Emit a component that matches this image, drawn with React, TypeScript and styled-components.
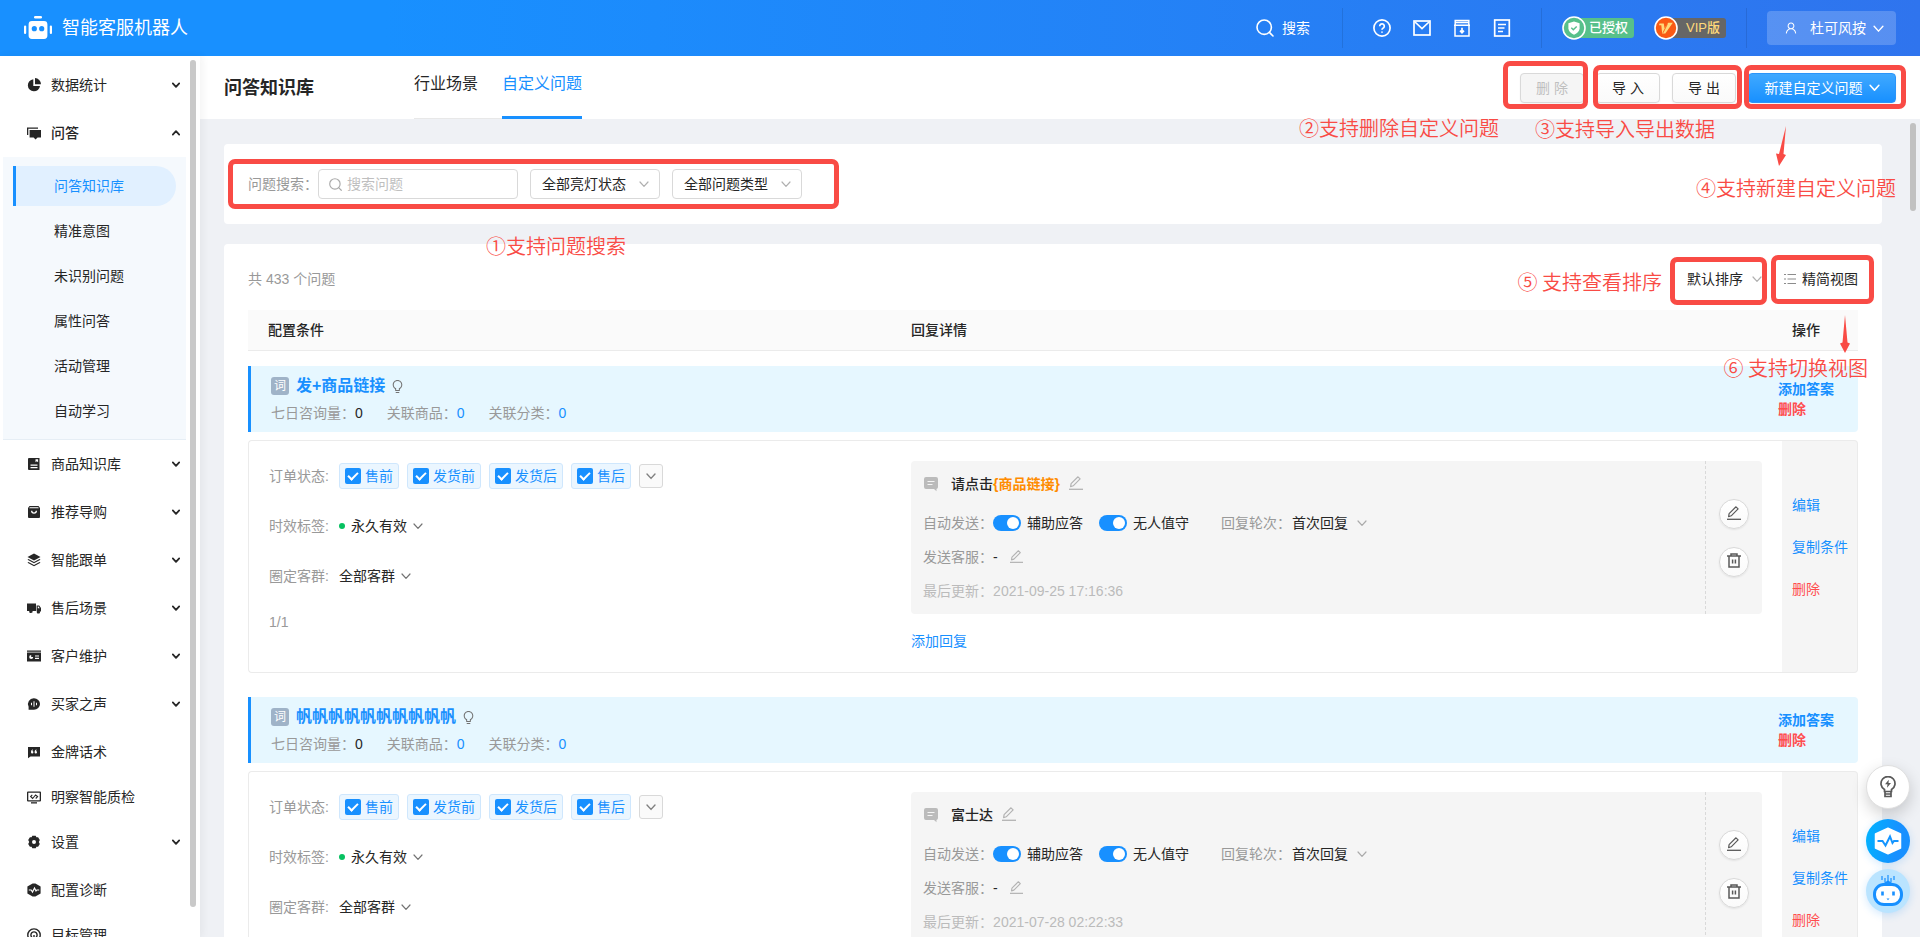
import React from "react";
import styled, { createGlobalStyle } from "styled-components";
import { AiOutlineBulb, AiOutlineUser } from "react-icons/ai";

const blue = "#1890ff";
const red = "#ff4d4f";
const markRed = "#f94b45";

const GlobalStyle = createGlobalStyle`
  *, *::before, *::after { box-sizing: border-box; }
  body {
    margin: 0;
    font-family: "Liberation Sans", "Noto Sans CJK SC", sans-serif;
    font-size: 14px;
    line-height: 22px;
    color: #262626;
    background: #eff1f5;
  }
  button, input, select { font: inherit; color: inherit; margin: 0; padding: 0; border: 0; background: none; }
  button, select { cursor: pointer; }
  a { color: ${blue}; text-decoration: none; }
  h1, h2, h3, p, ul { margin: 0; padding: 0; font: inherit; list-style: none; }
  svg { display: block; flex: none; }
`;

/* ---------- icons ---------- */

const Chevron = ({ size = 10, color = "#999", width = 1.4, up = false }: { size?: number; color?: string; width?: number; up?: boolean }) => (
  <svg width={size} height={size} viewBox="0 0 10 10" fill="none" stroke={color} strokeWidth={width} strokeLinecap="round" strokeLinejoin="round">
    <path d={up ? "M1 7l4-4.4L9 7" : "M1 3l4 4.4L9 3"} />
  </svg>
);

const SearchIcon = ({ size, color }: { size: number; color: string }) => (
  <svg width={size} height={size} viewBox="0 0 18 18" fill="none" stroke={color} strokeWidth="1.6" strokeLinecap="round">
    <circle cx="8.2" cy="8.2" r="7.2" />
    <path d="M13.4 13.4L17 17" />
  </svg>
);

const EditIcon = ({ size }: { size: number }) => (
  <svg width={size} height={size} viewBox="0 0 14 14" fill="none" stroke="currentColor" strokeWidth="1.2" strokeLinejoin="round">
    <path d="M1.600 10.600l.5-3L9 .8l2.100 2.100-6.900 6.900z" />
    <path d="M0 13.300h14" strokeWidth="1.300" />
  </svg>
);

const LogoIcon = () => (
  <svg width="28" height="24" viewBox="0 0 28 24" fill="#fff">
    <rect x="10" y="0" width="8" height="2.6" rx="1.3" />
    <path d="M8 5h12a3.4 3.4 0 013.4 3.400v11.200A3.400 3.400 0 0120 23H8a3.400 3.400 0 01-3.400-3.400V8.400A3.400 3.400 0 018 5z" />
    <rect x="0" y="9.500" width="2.200" height="8.500" rx="1.100" />
    <rect x="25.800" y="9.500" width="2.200" height="8.500" rx="1.100" />
    <circle cx="10.300" cy="12.700" r="2.600" fill={blue} />
    <circle cx="17.700" cy="12.700" r="2.600" fill={blue} />
  </svg>
);

const headerIcons: { name: string; art: React.ReactNode }[] = [
  {
    name: "帮助",
    art: (
      <>
        <circle cx="9" cy="9" r="8.100" />
        <path d="M6.700 7.200a2.300 2.300 0 114 1.500c-.8.7-1.700 1-1.700 2" />
        <path d="M9 12.400v1.300" />
      </>
    ),
  },
  { name: "邮件", art: <><rect x="1" y="2" width="16" height="14" /><path d="M2 3l7 6.500L16 3" /></> },
  {
    name: "下载",
    art: <><path d="M2 6.500V17h14V6.500M1 6.200h16M2.200 6V1.600h13.600V6M2.500 3.600h13" strokeWidth="1.500" /><path d="M9 8.700v5M7 11.700l2 2 2-2" /></>,
  },
  { name: "文档", art: <><rect x="1.700" y="1" width="14.600" height="16" /><path d="M5 5.500h8M5 9h6.500M5 12.500h5" /></> },
];

const menuIcons: Record<string, React.ReactNode> = {
  pie: <><path d="M6.300 1.200A6.100 6.100 0 1013 8H6.300z" /><path d="M8 0a6.200 6.200 0 016 6.200H8z" /></>,
  chat: <><path d="M0 1.500h11v1.300H1.300V9H0z" /><path d="M2.600 4H14v7.500h-3.400L8.500 13.500 6.600 11.500h-4z" /></>,
  book: <path fillRule="evenodd" d="M2 1h10.500v12H2a1 1 0 01-1-1V2a1 1 0 011-1zm6.500 1.200v3l1.300-1 1.300 1v-3zM3.500 7.500v1.200h7V7.500zm0 2.600v1.200h7v-1.200z" />,
  bag: <path fillRule="evenodd" d="M2.500 1h9L13 3v9a1 1 0 01-1 1H2a1 1 0 01-1-1V3zm.3 1.200l-.6 1h9.600l-.6-1zM4 5.800a3 3 0 006 0H8.700a1.700 1.700 0 01-3.400 0z" />,
  layers: <><path d="M7 .5l6.500 3.500L7 7.400.5 4z" /><path d="M1.500 6L.5 6.700 7 10.200l6.500-3.500-1-.7L7 8.900z" /><path d="M1.500 9l-1 .7L7 13.200l6.500-3.500-1-.7L7 11.900z" /></>,
  truck: <path fillRule="evenodd" d="M0 2.500h9V10H5.600a1.700 1.700 0 11-3.300 0H0zM9.600 4.500h2.600L14 7v3.500h-1.200a1.500 1.500 0 11-2.800 0h-.4zM10.800 5.500v1.700h1.900l-1.100-1.700z" />,
  card: <path fillRule="evenodd" d="M0 1.500h14v1.300H0zM0 3.600h14v9H0zm4.200 2.300a2 2 0 102 2h-2zM8 6.500v1.100h4V6.500zm0 2.300v1.100h4V8.800z" />,
  voice: <path fillRule="evenodd" d="M7 1.200a6 5.800 0 110 11.600H1.600V9.700A5.800 5.800 0 017 1.200zM4 5.700v2.600h1V5.700zm2.500-1.400v5.400h1V4.300zM9 5.700v2.600h1V5.700z" />,
  quote: <path fillRule="evenodd" d="M1 2h12v9.500H3.500L1 13.200zm4.900 2.600C4.700 4.900 4 5.700 4 7.300a1.200 1.200 0 101.200-1.200c0-.4.300-.7.900-.9zm3.600 0c-1.200.3-1.900 1.100-1.900 2.700a1.200 1.200 0 101.200-1.200c0-.4.300-.7.900-.9z" />,
  monitor: <><path fillRule="evenodd" d="M1 1.500h12a1 1 0 011 1v8a1 1 0 01-1 1H1a1 1 0 01-1-1v-8a1 1 0 011-1zM1.300 2.800v7.400h11.400V2.800z" /><path d="M4 12.200h6v1.300H4z" /><path d="M5.300 4.800L3.600 6.500l2 2 3-3.500 2 1.600-1.900 1.900" fill="none" stroke="currentColor" strokeWidth="1.100" /></>,
  gear: <path fillRule="evenodd" d="M5.300.8h3.400l.7 1.500 1.700-.1 1.700 2.900-1 1.900 1 1.900-1.700 2.900-1.700-.1-.7 1.500H5.300l-.7-1.500-1.700.1-1.700-2.900 1-1.900-1-1.900 1.700-2.900 1.700.1zM7 5a2 2 0 100 4 2 2 0 000-4z" />,
  pulse: <><path d="M5.600.5h2.800L13.600 3.600v6.800L8.400 13.500H5.600L.4 10.400V3.600z" /><path d="M1.800 7h2.400l1.300 2 2-4 1.500 3 .8-1h2.400" fill="none" stroke="#fff" strokeWidth="1.200" /></>,
  target: <g fill="none" stroke="currentColor" strokeWidth="1.400"><path d="M3.700 12.300a6.200 6.200 0 116.600 0" /><path d="M4.900 9.300a3.100 3.100 0 114.200 0" /><path d="M7 7v5.500" /></g>,
};

const TrashIcon = () => (
  <svg width="14" height="15" viewBox="0 0 14 15" fill="none" stroke="#595959" strokeWidth="1.500">
    <path d="M0 3h14M4 2.600V1h6v1.600M2 3.500V14h10V3.500M5.600 6.500v4M8.400 6.500v4" />
  </svg>
);

const MessageIcon = () => (
  <svg width="16" height="16" viewBox="0 0 16 16">
    <path fill="#bbb" d="M3 1h10a2 2 0 012 2v8a2 2 0 01-1.500 2v2.200L11 13H3a2 2 0 01-2-2V3a2 2 0 012-2z" />
    <path d="M4.500 5.500h7M4.500 8.500h5" stroke="#f5f5f5" strokeWidth="1.200" />
  </svg>
);

/* ---------- page frame ---------- */

const Page = styled.div`
  position: relative;
  display: flex;
  flex-direction: column;
  height: 100vh;
  min-width: 1200px;
  overflow: hidden;
`;

const TopBar = styled.header`
  display: flex;
  align-items: center;
  height: 56px;
  flex: none;
  padding: 0 24px;
  color: #fff;
  background: linear-gradient(90deg, #1890ff 20%, #2f74ee 100%);
`;

const Brand = styled.div`
  display: flex;
  align-items: center;
  gap: 10px;
  margin-right: auto;
  font-size: 18px;
`;

const Divider = styled.span`
  width: 1px;
  height: 40px;
  background: rgba(0, 0, 0, 0.1);
`;

const TopSearch = styled.button`
  display: flex;
  align-items: center;
  gap: 8px;
  margin-right: 32px;
`;

const TopIcons = styled.nav`
  display: flex;
  gap: 22px;
  padding: 0 30px;
`;

const Badges = styled.div`
  display: flex;
  gap: 20px;
  padding: 0 20px;
`;

const Badge = styled.span<{ $bg: string; $fg: string }>`
  position: relative;
  display: flex;
  align-items: center;
  justify-content: flex-end;
  width: 72px;
  height: 24px;
  padding-right: 6px;
  font-size: 13px;
  font-weight: 500;
  color: ${(p) => p.$fg};

  &::before {
    content: "";
    position: absolute;
    z-index: 0;
    inset: 2px 0 2px 12px;
    border-radius: 0 3px 3px 0;
    background: ${(p) => p.$bg};
  }
  svg { position: absolute; left: 0; top: 0; }
  span { position: relative; }
`;

const UserButton = styled.button`
  display: flex;
  align-items: center;
  height: 34px;
  margin-left: 20px;
  padding: 0 12px 0 17px;
  border-radius: 4px;
  background: rgba(255, 255, 255, 0.2);

  span { margin: 0 7px 0 12px; }
`;

const Columns = styled.div`
  display: flex;
  flex: 1;
  min-height: 0;
`;

/* ---------- side menu ---------- */

const SideBar = styled.aside`
  position: relative;
  z-index: 1;
  width: 200px;
  flex: none;
  background: #fff;
  box-shadow: 2px 0 8px rgba(29, 35, 41, 0.06);
`;

const MenuScroll = styled.nav`
  height: 100%;
  padding: 5px 14px 0 3px;
  overflow-y: auto;
  scrollbar-width: none;
`;

const ScrollThumb = styled.div<{ $tone: string }>`
  position: absolute;
  top: 4px;
  right: 4px;
  width: 6px;
  border-radius: 3px;
  background: ${(p) => p.$tone};
`;

const SideThumb = styled(ScrollThumb)`
  bottom: 30px;
`;

const MenuButton = styled.button<{ $group: boolean; $open: boolean }>`
  display: flex;
  align-items: center;
  gap: 10px;
  width: 100%;
  height: ${(p) => (p.$group ? 48 : 45)}px;
  padding: ${(p) => (p.$group ? 0 : 3)}px 6px 0 24px;
  font-weight: ${(p) => (p.$open ? 500 : 400)};

  span { flex: 1; text-align: left; }
`;

const SubMenu = styled.ul`
  display: flex;
  flex-direction: column;
  gap: 5px;
  padding: 9px 10px 8px;
  background: #f5f9fd;
  border-bottom: 1px solid #e6eef5;
`;

const SubLink = styled.a<{ $active: boolean }>`
  display: block;
  padding-left: ${(p) => (p.$active ? 38 : 41)}px;
  line-height: 40px;
  color: ${(p) => (p.$active ? blue : "#262626")};
  background: ${(p) => (p.$active ? "#e1f0ff" : "none")};
  border-left: ${(p) => (p.$active ? `3px solid ${blue}` : "none")};
  border-radius: 0 20px 20px 0;
`;

/* ---------- main column ---------- */

const Main = styled.main`
  display: flex;
  flex-direction: column;
  flex: 1;
  min-width: 0;
`;

const PageHead = styled.div`
  display: flex;
  align-items: center;
  height: 63px;
  flex: none;
  padding: 0 24px;
  background: #fff;
`;

const PageTitle = styled.h1`
  width: 190px;
  font-size: 18px;
  font-weight: 700;
`;

const Tabs = styled.nav`
  display: flex;
  gap: 24px;
  align-self: stretch;
  margin-right: auto;
  background: linear-gradient(#e8e8e8, #e8e8e8) left bottom / 100% 1px no-repeat;
`;

const Tab = styled.a<{ $active: boolean }>`
  font-size: 16px;
  line-height: 56px;
  color: ${(p) => (p.$active ? blue : "#262626")};
  border-bottom: ${(p) => (p.$active ? `3px solid ${blue}` : "none")};
`;

const Actions = styled.div`
  display: flex;
  gap: 12px;
`;

const Button = styled.button<{ $primary?: boolean }>`
  display: flex;
  align-items: center;
  justify-content: center;
  gap: 6px;
  height: 30px;
  min-width: ${(p) => (p.$primary ? 148 : 64)}px;
  border: 1px solid ${(p) => (p.$primary ? "#2b95f9" : "#d9d9d9")};
  border-radius: 4px;
  color: ${(p) => (p.$primary ? "#fff" : "#262626")};
  background: ${(p) => (p.$primary ? "linear-gradient(#40a9ff, #1890ff)" : "linear-gradient(#fff, #fafafa)")};
  box-shadow: 0 1px 2px rgba(0, 0, 0, 0.05);

  &:disabled { color: #bfbfbf; background: #f5f5f5; cursor: not-allowed; }
`;

const ScrollWrap = styled.div`
  position: relative;
  flex: 1;
  min-height: 0;
`;

const Scroll = styled.div`
  display: flex;
  flex-direction: column;
  gap: 20px;
  height: 100%;
  padding: 25px 38px 0 24px;
  overflow-y: auto;
  scrollbar-width: none;
`;

const MainThumb = styled(ScrollThumb)`
  height: 88px;
`;

const Card = styled.section`
  flex: none;
  padding: 24px;
  border-radius: 4px;
  background: #fff;
`;

const Filters = styled.form`
  display: flex;
  align-items: center;
  height: 32px;
`;

const SearchBox = styled.div`
  display: flex;
  align-items: center;
  gap: 5px;
  width: 200px;
  height: 30px;
  margin-right: 12px;
  padding: 0 10px;
  border: 1px solid #d9d9d9;
  border-radius: 4px;

  input { width: 100%; min-width: 0; outline: none; }
  input::placeholder { color: #bfbfbf; }
`;

const Muted = styled.span`
  color: #999;
`;

const SelectShell = styled.span<{ $boxed?: boolean; $tight?: boolean }>`
  display: inline-flex;
  align-items: center;
  gap: ${(p) => (p.$tight ? 6 : 9)}px;
  ${(p) => p.$boxed && `
    justify-content: space-between;
    width: 130px;
    height: 30px;
    margin-right: 12px;
    padding: 0 10px 0 11px;
    border: 1px solid #d9d9d9;
    border-radius: 4px;
  `}

  select { appearance: none; outline: none; }
`;

const Toolbar = styled.div`
  display: flex;
  align-items: center;
  justify-content: space-between;
  height: 22px;
  margin-bottom: 20px;

  div { display: flex; gap: 22px; }
`;

const ViewButton = styled.button`
  display: flex;
  align-items: center;
  gap: 6px;
`;

/* ---------- question table ---------- */

const Table = styled.table`
  width: 100%;
  table-layout: fixed;
  border-collapse: separate;
  border-spacing: 0;

  th, td { padding: 0; text-align: left; vertical-align: top; }
  th {
    height: 41px;
    padding-left: 20px;
    vertical-align: middle;
    font-weight: 500;
    background: #fafafa;
    border-bottom: 1px solid #ebebeb;
  }
  th:nth-child(1) { width: 41%; }
  th:nth-child(2) { padding-left: 3px; }
  th:nth-child(3) { width: 76px; padding-left: 10px; }
`;

const Question = styled.tbody``;

const BannerCell = styled.td`
  && { padding: 15px 0 8px; }
  ${Question} + ${Question} && { padding-top: 24px; }
`;

const Banner = styled.div`
  display: flex;
  align-items: center;
  justify-content: space-between;
  height: 66px;
  padding-left: 20px;
  border-left: 3px solid ${blue};
  border-radius: 0 4px 4px 0;
  background: #e6f7ff;
`;

const BannerTitle = styled.div`
  display: flex;
  align-items: center;
  margin-bottom: 4px;
  line-height: 24px;

  h2 { margin: 0 5px 0 7px; font-size: 16px; font-weight: 700; color: ${blue}; }
`;

const WordMark = styled.span`
  width: 18px;
  height: 18px;
  border-radius: 3px;
  font-size: 12px;
  line-height: 18px;
  text-align: center;
  color: #fff;
  background: #9fb3c8;
`;

const Stats = styled.div`
  display: flex;
  gap: 24px;
  color: #999;

  b { font-weight: 400; color: #262626; }
`;

const BannerActions = styled.div`
  display: flex;
  flex-direction: column;
  align-items: flex-start;
  width: 80px;
`;

const TextButton = styled.button<{ $danger?: boolean; $strong?: boolean }>`
  line-height: ${(p) => (p.$strong ? 20 : 22)}px;
  font-weight: ${(p) => (p.$strong ? 700 : 400)};
  color: ${(p) => (p.$danger ? red : blue)};
`;

const ConditionCell = styled.td`
  && { height: 233px; padding: 22px 0 0 20px; }
  border: 1px solid #ebebeb;
  border-right: 0;
  border-radius: 4px 0 0 4px;
`;

const ReplyCell = styled.td`
  && { padding: 20px 20px 0 3px; }
  border: 1px solid #ebebeb;
  border-width: 1px 0;
`;

const ActionCell = styled.td`
  && { padding: 53px 0 0 10px; }
  border: 1px solid #ebebeb;
  border-left: 0;
  border-radius: 0 4px 4px 0;
  background: #f5f5f5;
`;

const ActionList = styled.div`
  display: flex;
  flex-direction: column;
  align-items: flex-start;
  gap: 20px;
`;

const Condition = styled.div`
  display: flex;
  align-items: center;
  gap: 8px;
  height: 26px;
  margin-bottom: 24px;

  > ${Muted} { width: 62px; }
`;

const StateTag = styled.label`
  display: flex;
  align-items: center;
  gap: 4px;
  height: 26px;
  padding: 0 5px;
  border: 1px solid #cfe7fd;
  border-radius: 3px;
  color: ${blue};
  background: #ebf6ff;
`;

const Check = styled.input`
  position: relative;
  width: 16px;
  height: 16px;
  appearance: none;
  border-radius: 2px;

  &:not(:checked) { border: 1px solid #d9d9d9; background: #fff; }
  &:checked { background: ${blue}; }
  &:checked::after {
    content: "";
    position: absolute;
    left: 5px;
    top: 2px;
    width: 6px;
    height: 10px;
    border: solid #fff;
    border-width: 0 2px 2px 0;
    transform: rotate(45deg);
  }
`;

const MoreButton = styled.button`
  display: grid;
  place-items: center;
  width: 24px;
  height: 24px;
  border: 1px solid #d9d9d9;
  border-radius: 3px;
  background: #fafafa;
`;

const Dot = styled.i`
  width: 6px;
  height: 6px;
  margin-right: -2px;
  border-radius: 50%;
  background: #07c160;
`;

const Reply = styled.div`
  display: flex;
  margin-bottom: 16px;
  border-radius: 4px;
  background: #f5f5f5;
`;

const ReplyBody = styled.div`
  flex: 1;
  padding: 12px;
`;

const ReplyTools = styled.div`
  display: flex;
  flex-direction: column;
  align-items: center;
  justify-content: center;
  gap: 18px;
  width: 57px;
  border-left: 1px dashed #d9d9d9;
`;

const RoundButton = styled.button`
  display: grid;
  place-items: center;
  width: 30px;
  height: 30px;
  padding-bottom: 2px;
  border: 1px solid #d9d9d9;
  border-radius: 50%;
  color: #595959;
  background: linear-gradient(#fff, #fafafa);
  box-shadow: 0 1px 2px rgba(0, 0, 0, 0.08);
`;

const ReplyText = styled.div`
  display: flex;
  align-items: center;
  margin-bottom: 17px;
  font-weight: 500;

  p { margin: 0 9px 0 12px; }
  em { font-style: normal; font-weight: 700; color: #ff8c00; }
`;

const ReplyRow = styled.div<{ $faint?: boolean }>`
  display: flex;
  align-items: center;
  color: ${(p) => (p.$faint ? "#bbb" : "#262626")};

  & + & { margin-top: 12px; }
`;

const SwitchLabel = styled.label`
  display: flex;
  align-items: center;
  gap: 6px;
  margin-right: 16px;
`;

const Agents = styled.span`
  margin-right: 12px;
`;

const Switch = styled.input`
  position: relative;
  width: 28px;
  height: 16px;
  appearance: none;
  border-radius: 8px;
  background: #bfbfbf;

  &::after {
    content: "";
    position: absolute;
    top: 2px;
    left: 2px;
    width: 12px;
    height: 12px;
    border-radius: 50%;
    background: #fff;
  }
  &:checked { background: ${blue}; }
  &:checked::after { left: 14px; }
`;

const Rounds = styled.div`
  display: flex;
  align-items: center;
  gap: 1px;
  margin-left: 16px;
`;

const EditLink = styled.button`
  padding-bottom: 2px;
  color: #b3b3b3;
`;

const Pager = styled.p`
  color: #999;
  line-height: 18px;
`;

/* ---------- floating helpers ---------- */

const Floats = styled.div`
  position: absolute;
  z-index: 2;
  right: 10px;
  bottom: 24px;
  display: flex;
  flex-direction: column;
  gap: 6px;
`;

const FloatButton = styled.button<{ $bg: string }>`
  display: grid;
  place-items: center;
  width: 44px;
  height: 44px;
  border-radius: 50%;
  background: ${(p) => p.$bg};
  box-shadow: 0 2px 8px rgba(24, 144, 255, 0.2);

  &:first-child {
    margin-bottom: 4px;
    border: 1px solid #e0e0e0;
    box-shadow: 0 6px 16px rgba(0, 0, 0, 0.18);
  }
`;

/* ---------- tutorial marks over the page ---------- */

const MarkBox = styled.div<{ $x: number; $y: number; $w: number; $h: number; $fromLeft?: boolean }>`
  position: absolute;
  z-index: 3;
  top: ${(p) => p.$y}px;
  ${(p) => (p.$fromLeft ? "left" : "right")}: ${(p) => p.$x}px;
  width: ${(p) => p.$w}px;
  height: ${(p) => p.$h}px;
  border: 5px solid ${markRed};
  border-radius: 7px;
  pointer-events: none;
`;

const MarkText = styled.div<{ $x: number; $y: number; $fromLeft?: boolean }>`
  position: absolute;
  z-index: 3;
  top: ${(p) => p.$y}px;
  ${(p) => (p.$fromLeft ? "left" : "right")}: ${(p) => p.$x}px;
  font-family: "Noto Sans CJK SC", sans-serif;
  font-size: 20px;
  font-weight: 350;
  line-height: 28px;
  white-space: nowrap;
  color: ${markRed};
  pointer-events: none;
`;

const MarkArrow = styled.svg<{ $x: number; $y: number }>`
  position: absolute;
  z-index: 3;
  top: ${(p) => p.$y}px;
  right: ${(p) => p.$x}px;
  fill: ${markRed};
  pointer-events: none;
`;

/* ---------- data ---------- */

const menuTop = [
  { icon: "pie", label: "数据统计", group: true },
  { icon: "chat", label: "问答", group: true, open: true },
];
const subMenu = ["问答知识库", "精准意图", "未识别问题", "属性问答", "活动管理", "自动学习"];
const menuRest = [
  { icon: "book", label: "商品知识库", group: true },
  { icon: "bag", label: "推荐导购", group: true },
  { icon: "layers", label: "智能跟单", group: true },
  { icon: "truck", label: "售后场景", group: true },
  { icon: "card", label: "客户维护", group: true },
  { icon: "voice", label: "买家之声", group: true },
  { icon: "quote", label: "金牌话术", group: false },
  { icon: "monitor", label: "明察智能质检", group: false },
  { icon: "gear", label: "设置", group: true },
  { icon: "pulse", label: "配置诊断", group: false },
  { icon: "target", label: "目标管理", group: false },
];

type QuestionData = { title: string; text: string; variable?: string; updated: string };
const questions: QuestionData[] = [
  { title: "发+商品链接", text: "请点击", variable: "{商品链接}", updated: "2021-09-25 17:16:36" },
  { title: "帆帆帆帆帆帆帆帆帆帆", text: "富士达", updated: "2021-07-28 02:22:33" },
];
const orderStates = ["售前", "发货前", "发货后", "售后"];

/* ---------- parts ---------- */

const MenuItem = ({ icon, label, group, open = false }: { icon: string; label: string; group: boolean; open?: boolean }) => (
  <MenuButton $group={group} $open={open}>
    <svg width="14" height="14" viewBox="0 0 14 14" fill="currentColor">{menuIcons[icon]}</svg>
    <span>{label}</span>
    {group && <Chevron size={8} color="#262626" width={2.2} up={open} />}
  </MenuButton>
);

const Select = ({ value, label, boxed, tight, tone = "#999" }: { value: string; label: string; boxed?: boolean; tight?: boolean; tone?: string }) => (
  <SelectShell $boxed={boxed} $tight={tight}>
    <select aria-label={label}><option>{value}</option></select>
    <Chevron color={tone} width={1.2} />
  </SelectShell>
);

const QuestionRows = ({ q }: { q: QuestionData }) => (
  <Question>
    <tr>
      <BannerCell colSpan={3}>
        <Banner>
          <div>
            <BannerTitle>
              <WordMark>词</WordMark>
              <h2>{q.title}</h2>
              <AiOutlineBulb size={15} color="#737373" />
            </BannerTitle>
            <Stats>
              <span>七日咨询量：<b>0</b></span>
              <span>关联商品：<a href="#goods">0</a></span>
              <span>关联分类：<a href="#category">0</a></span>
            </Stats>
          </div>
          <BannerActions>
            <TextButton $strong>添加答案</TextButton>
            <TextButton $strong $danger>删除</TextButton>
          </BannerActions>
        </Banner>
      </BannerCell>
    </tr>
    <tr>
      <ConditionCell>
        <Condition>
          <Muted>订单状态:</Muted>
          {orderStates.map((s) => (
            <StateTag key={s}><Check type="checkbox" defaultChecked />{s}</StateTag>
          ))}
          <MoreButton aria-label="更多状态"><Chevron color="#808080" /></MoreButton>
        </Condition>
        <Condition>
          <Muted>时效标签:</Muted>
          <Dot />
          <Select tight value="永久有效" label="时效标签" tone="#737373" />
        </Condition>
        <Condition>
          <Muted>圈定客群:</Muted>
          <Select tight value="全部客群" label="圈定客群" tone="#737373" />
        </Condition>
        <Pager>1/1</Pager>
      </ConditionCell>
      <ReplyCell>
        <Reply>
          <ReplyBody>
            <ReplyText>
              <MessageIcon />
              <p>{q.text}{q.variable && <em>{q.variable}</em>}</p>
              <EditLink aria-label="编辑回复"><EditIcon size={14} /></EditLink>
            </ReplyText>
            <ReplyRow>
              <Muted>自动发送：</Muted>
              <SwitchLabel><Switch type="checkbox" role="switch" defaultChecked />辅助应答</SwitchLabel>
              <SwitchLabel><Switch type="checkbox" role="switch" defaultChecked />无人值守</SwitchLabel>
              <Rounds>
                <Muted>回复轮次：</Muted>
                <Select value="首次回复" label="回复轮次" tone="#aaa" />
              </Rounds>
            </ReplyRow>
            <ReplyRow>
              <Muted>发送客服：</Muted>
              <Agents>-</Agents>
              <EditLink aria-label="编辑客服"><EditIcon size={13} /></EditLink>
            </ReplyRow>
            <ReplyRow $faint>最后更新：{q.updated}</ReplyRow>
          </ReplyBody>
          <ReplyTools>
            <RoundButton aria-label="编辑"><EditIcon size={14} /></RoundButton>
            <RoundButton aria-label="删除"><TrashIcon /></RoundButton>
          </ReplyTools>
        </Reply>
        <TextButton>添加回复</TextButton>
      </ReplyCell>
      <ActionCell>
        <ActionList>
          <TextButton>编辑</TextButton>
          <TextButton>复制条件</TextButton>
          <TextButton $danger>删除</TextButton>
        </ActionList>
      </ActionCell>
    </tr>
  </Question>
);

export default function App() {
  return (
    <Page>
      <GlobalStyle />
      <TopBar>
        <Brand><LogoIcon />智能客服机器人</Brand>
        <TopSearch><SearchIcon size={18} color="#fff" />搜索</TopSearch>
        <Divider />
        <TopIcons>
          {headerIcons.map((i) => (
            <a key={i.name} href="#top" aria-label={i.name}>
              <svg width="18" height="18" viewBox="0 0 18 18" fill="none" stroke="#fff" strokeWidth="1.700">{i.art}</svg>
            </a>
          ))}
        </TopIcons>
        <Divider />
        <Badges>
          <Badge $bg="#57c08a" $fg="#fff">
            <svg width="24" height="24" viewBox="0 0 24 24">
              <circle cx="12" cy="12" r="11" fill="#57c08a" stroke="#fff" strokeWidth="1.600" />
              <path d="M12 5.500l5.600 1.800v4.900c0 3-2.300 5-5.600 6.600-3.300-1.600-5.600-3.600-5.600-6.600V7.300z" fill="#fff" />
              <path d="M9.300 11.800l2 2 3.400-3.400" fill="none" stroke="#57c08a" strokeWidth="1.400" />
            </svg>
            <span>已授权</span>
          </Badge>
          <Badge $bg="#666" $fg="#ffd97a">
            <svg width="24" height="24" viewBox="0 0 24 24">
              <circle cx="12" cy="12" r="11" fill="#fa5a14" stroke="#fff" strokeWidth="1.600" />
              <path d="M5.500 7.500h4.300l.7 4.800 3.700-5.600h4.600l-7.500 10.800H8.200L7.300 9.300H5z" fill="#ffd97a" />
              <path d="M13.300 8.200L9 16.800" stroke="#fa5a14" strokeWidth="0.900" />
            </svg>
            <span>VIP版</span>
          </Badge>
        </Badges>
        <Divider />
        <UserButton>
          <AiOutlineUser size={14} />
          <span>杜可风按</span>
          <Chevron size={11} color="#fff" width={1.300} />
        </UserButton>
      </TopBar>

      <Columns>
        <SideBar>
          <MenuScroll>
            {menuTop.map((m) => <MenuItem key={m.label} {...m} />)}
            <SubMenu>
              {subMenu.map((s, i) => (
                <li key={s}><SubLink href="#menu" $active={i === 0}>{s}</SubLink></li>
              ))}
            </SubMenu>
            {menuRest.map((m) => <MenuItem key={m.label} {...m} />)}
          </MenuScroll>
          <SideThumb $tone="#c9c9c9" />
        </SideBar>

        <Main>
          <PageHead>
            <PageTitle>问答知识库</PageTitle>
            <Tabs>
              <Tab href="#scene" $active={false}>行业场景</Tab>
              <Tab href="#custom" $active>自定义问题</Tab>
            </Tabs>
            <Actions>
              <Button disabled>删 除</Button>
              <Button>导 入</Button>
              <Button>导 出</Button>
              <Button $primary>新建自定义问题<Chevron size={11} color="#fff" /></Button>
            </Actions>
          </PageHead>
          <ScrollWrap>
            <Scroll>
              <Card>
                <Filters>
                  <Muted as="label" htmlFor="question-search">问题搜索：</Muted>
                  <SearchBox>
                    <SearchIcon size={13} color="#aaa" />
                    <input id="question-search" placeholder="搜索问题" />
                  </SearchBox>
                  <Select boxed value="全部亮灯状态" label="亮灯状态" tone="#b0b0b0" />
                  <Select boxed value="全部问题类型" label="问题类型" tone="#b0b0b0" />
                </Filters>
              </Card>
              <Card>
                <Toolbar>
                  <Muted>共 433 个问题</Muted>
                  <div>
                    <Select value="默认排序" label="排序" tone="#b0b0b0" />
                    <ViewButton>
                      <svg width="12" height="12" viewBox="0 0 12 12" stroke="#8c8c8c">
                        <path d="M0 1.500h2M3.500 1.500H12M0 6h2M3.500 6H12M0 10.500h2M3.500 10.500H12" />
                      </svg>
                      精简视图
                    </ViewButton>
                  </div>
                </Toolbar>
                <Table>
                  <thead>
                    <tr><th>配置条件</th><th>回复详情</th><th>操作</th></tr>
                  </thead>
                  {questions.map((q) => <QuestionRows key={q.title} q={q} />)}
                </Table>
              </Card>
            </Scroll>
            <MainThumb $tone="#c1c1c1" />
          </ScrollWrap>
        </Main>
      </Columns>

      <Floats>
        <FloatButton $bg="#fff" aria-label="提示">
          <svg width="18" height="22" viewBox="0 0 18 22" fill="none" stroke="#595959" strokeWidth="1.700">
            <path d="M5.500 15.500v-1.900a7 7 0 1 1 7 0v1.900zM6 15.500V20.500h6v-5M6 18h6" />
            <path d="M9.800 3.800L6 8.300h2.500L8 11.800l4-4.800H9.500z" fill="#595959" stroke="none" />
          </svg>
        </FloatButton>
        <FloatButton $bg="linear-gradient(100deg, #00b4ff, #1890ff 70%)" aria-label="诊断">
          <svg width="28" height="28" viewBox="0 0 28 28">
            <path d="M14 1.200L26.500 7v14L14 26.800 1.500 21V7z" fill="#fff" stroke="#fff" strokeWidth="1.500" strokeLinejoin="round" />
            <path d="M3.500 14h5l3 4.500 4.500-9 2.500 6.500 1.500-2h4.500" fill="none" stroke="#1495ff" strokeWidth="2" />
          </svg>
        </FloatButton>
        <FloatButton $bg="#bae4ff" aria-label="助手">
          <svg width="32" height="32" viewBox="0 0 32 32">
            <path d="M16 0v8M10 1v4M22 1v4M13 3v4M19 3v4" stroke="#1890ff" strokeWidth="1.200" />
            <path d="M9 9.500l7-4 7 4z" fill="#1890ff" />
            <rect x="2.500" y="9.500" width="27" height="20" rx="9.500" fill="#fff" stroke="#1890ff" strokeWidth="3" />
            <path d="M10.500 16.500v4M21.500 16.500v4" stroke="#1890ff" strokeWidth="2.600" />
            <path d="M14.500 23.500h3l-1.500 1.800z" fill="#1890ff" />
          </svg>
        </FloatButton>
      </Floats>

      <MarkBox $fromLeft $x={228} $y={159} $w={611} $h={50} />
      <MarkBox $x={332} $y={61} $w={85} $h={48} />
      <MarkBox $x={178} $y={65} $w={149} $h={44} />
      <MarkBox $x={14} $y={65} $w={162} $h={44} />
      <MarkBox $x={153} $y={257} $w={97} $h={48} />
      <MarkBox $x={46} $y={255} $w={103} $h={49} />
      <MarkText $fromLeft $x={486} $y={232}>①支持问题搜索</MarkText>
      <MarkText $x={421} $y={114}>②支持删除自定义问题</MarkText>
      <MarkText $x={205} $y={115}>③支持导入导出数据</MarkText>
      <MarkText $x={24} $y={174}>④支持新建自定义问题</MarkText>
      <MarkText $x={258} $y={268}>⑤ 支持查看排序</MarkText>
      <MarkText $x={52} $y={354}>⑥ 支持切换视图</MarkText>
      <MarkArrow $x={133} $y={126} width="12" height="40" viewBox="0 0 12 40">
        <path d="M11 0L8.500 28l2.500 1L4 40 1 27.500l3 .5z" />
      </MarkArrow>
      <MarkArrow $x={70} $y={315} width="10" height="38" viewBox="0 0 10 38">
        <path d="M5 0l2.500 27.500L10 28.500 5 38 0 28.500l2.500-1z" />
      </MarkArrow>
    </Page>
  );
}
